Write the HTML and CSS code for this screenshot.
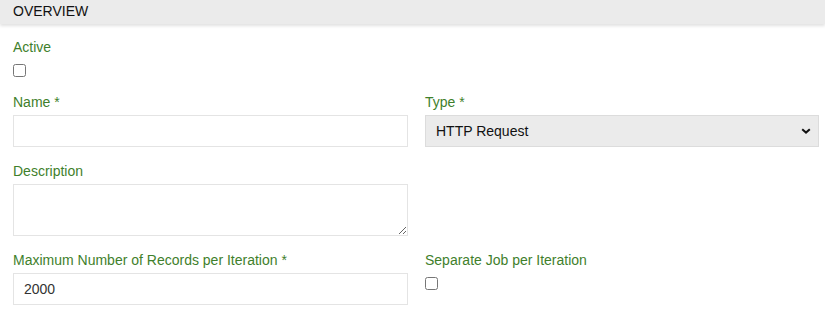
FILE: index.html
```html
<!DOCTYPE html>
<html>
<head>
<meta charset="utf-8">
<link rel="stylesheet" href="styles.css">
</head>
<body>
<div class="panel">
  <div class="panel-header">OVERVIEW</div>
  <div class="form">
    <div class="group">
      <label class="lbl">Active</label>
      <input type="checkbox" class="check">
    </div>
    <div class="group"></div>
    <div class="group">
      <label class="lbl">Name *</label>
      <input type="text" class="field">
    </div>
    <div class="group">
      <label class="lbl">Type *</label>
      <div class="select-wrap">
        <select class="field select">
          <option>HTTP Request</option>
        </select>
        <svg class="chev" width="10" height="6" viewBox="0 0 10 6"><path d="M1.2 1.2 L5 4.6 L8.8 1.2" fill="none" stroke="#111" stroke-width="2"/></svg>
      </div>
    </div>
    <div class="group">
      <label class="lbl">Description</label>
      <textarea class="field area"></textarea>
    </div>
    <div class="group"></div>
    <div class="group">
      <label class="lbl">Maximum Number of Records per Iteration *</label>
      <input type="text" class="field" value="2000">
    </div>
    <div class="group">
      <label class="lbl">Separate Job per Iteration</label>
      <input type="checkbox" class="check">
    </div>
  </div>
</div>
</body>
</html>
```
FILE: styles.css
```css
html, body {
  margin: 0;
  padding: 0;
  background: #ffffff;
  font-family: "Liberation Sans", Arial, sans-serif;
  font-size: 14px;
}
.panel-header {
  height: 24px;
  line-height: 22px;
  padding-left: 13px;
  background: #ebebeb;
  color: #111;
  font-size: 14px;
  box-shadow: 0 2px 3px rgba(0, 0, 0, 0.12);
  position: relative;
}
.form {
  display: grid;
  grid-template-columns: 395px 394px;
  column-gap: 17px;
  row-gap: 16px;
  padding: 15px 6px 0 13px;
}
.group {
  display: flex;
  flex-direction: column;
  align-items: flex-start;
}
.lbl {
  display: block;
  line-height: 16px;
  color: #3f7f2c;
  margin-bottom: 5px;
}
.check {
  margin: 4px 0 1px 0;
  width: 13px;
  height: 13px;
}
.field {
  box-sizing: border-box;
  width: 100%;
  height: 32px;
  margin: 0;
  border: 1px solid #e4e4e4;
  border-radius: 0;
  background: #fff;
  font-family: "Liberation Sans", Arial, sans-serif;
  font-size: 14px;
  color: #333;
  padding: 0 10px;
  outline: none;
}
.select-wrap {
  position: relative;
  width: 100%;
}
.select {
  display: block;
  -webkit-appearance: none;
  appearance: none;
  background: #ebebeb;
  border-color: #dcdcdc;
  color: #111;
  padding-left: 10px;
}
.chev {
  position: absolute;
  right: 8px;
  top: 13px;
  pointer-events: none;
}
.area {
  height: 52px;
  resize: both;
  padding: 6px 10px;
}
```
